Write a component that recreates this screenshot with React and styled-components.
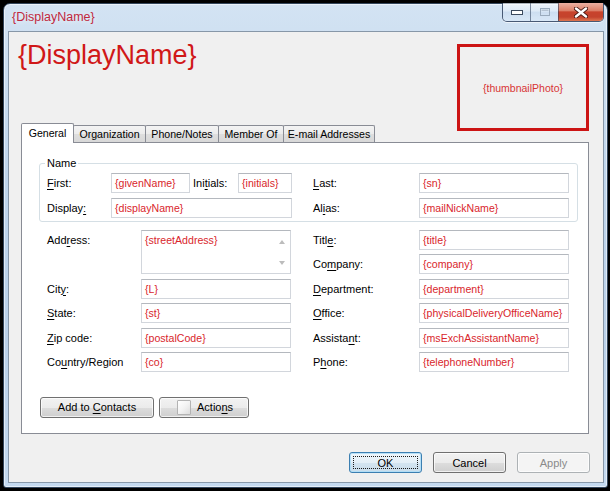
import styled, { createGlobalStyle } from 'styled-components';

const GlobalStyle = createGlobalStyle`
  html, body {
    margin: 0;
    padding: 0;
    background: #000;
  }
  body {
    font-family: "Liberation Sans", Arial, sans-serif;
    font-size: 11px;
    color: #000;
  }
  * {
    box-sizing: border-box;
  }
`;

const Screen = styled.div`
  width: 610px;
  height: 491px;
  padding: 3px 0 0 3px;
  background: #000;
`;

const Window = styled.div`
  width: 605px;
  height: 485px;
  display: flex;
  flex-direction: column;
  border: 1px solid #33465c;
  border-radius: 7px 7px 3px 3px;
  background: linear-gradient(to bottom, #d3e3f3 0%, #bfd5ec 35%, #b9d0e9 70%, #c4d9ef 100%);
  box-shadow: inset 0 0 0 1px rgba(255, 255, 255, 0.55);
`;

const TitleBar = styled.div`
  height: 27px;
  display: flex;
  justify-content: space-between;
  align-items: flex-start;
  padding: 0 3px 0 8px;
`;

const TitleText = styled.div`
  margin-top: 6px;
  font-size: 12.5px;
  line-height: 15px;
  color: #c0283e;
  text-shadow: 0 0 6px rgba(255, 255, 255, 0.9);
`;

const CaptionGroup = styled.div`
  display: flex;
  height: 19px;
  margin-top: -1px;
  border: 1px solid rgba(38, 56, 84, 0.8);
  border-top: none;
  border-radius: 0 0 5px 5px;
  overflow: hidden;
  box-shadow: 0 1px 0 rgba(255, 255, 255, 0.6);
`;

const CaptionButton = styled.div`
  width: ${({ $w }) => $w}px;
  display: flex;
  align-items: center;
  justify-content: center;
  background: ${({ $close }) => $close
    ? 'linear-gradient(to bottom, #eab0a2 0%, #dc8068 42%, #c8432c 50%, #c4432c 78%, #dd7550 100%)'
    : 'linear-gradient(to bottom, rgba(255,255,255,0.6) 0%, rgba(236,243,251,0.45) 45%, rgba(196,214,236,0.35) 50%, rgba(222,236,250,0.55) 100%)'};

  & + & {
    border-left: 1px solid rgba(38, 56, 84, 0.55);
  }
`;

const Client = styled.div`
  flex: 1;
  margin: 0 3px 4px 4px;
  border: 1px solid #8797a8;
  background: #f0f0f0;
  display: flex;
  flex-direction: column;
`;

const Header = styled.div`
  height: 91px;
  display: flex;
  justify-content: space-between;
  align-items: flex-start;
  padding: 0 14px 0 9px;
`;

const Heading = styled.h1`
  margin: 8px 0 0;
  font-size: 27px;
  line-height: 31px;
  font-weight: normal;
  color: #d01818;
`;

const Thumbnail = styled.div`
  width: 132px;
  height: 87px;
  flex-shrink: 0;
  margin-top: 12px;
  position: relative;
  z-index: 3;
  border: 3px solid #cc1414;
  display: flex;
  align-items: center;
  justify-content: center;
  font-size: 10.5px;
  color: #d83434;
`;

const TabArea = styled.div`
  padding: 0 14px 0 12px;
`;

const TabStrip = styled.div`
  height: 19px;
  display: flex;
  align-items: flex-end;
`;

const Tab = styled.div`
  width: ${({ $w }) => $w}px;
  height: ${({ $active }) => ($active ? 20 : 17)}px;
  margin-bottom: ${({ $active }) => ($active ? -1 : 0)}px;
  position: relative;
  z-index: ${({ $active }) => ($active ? 2 : 1)};
  display: flex;
  align-items: center;
  justify-content: center;
  border: 1px solid #898c95;
  border-bottom: none;
  border-radius: 2px 2px 0 0;
  background: ${({ $active }) => $active
    ? '#fff'
    : 'linear-gradient(to bottom, #f4f4f4 0%, #ebebeb 50%, #dedede 51%, #d8d8d8 100%)'};
  padding-bottom: ${({ $active }) => ($active ? 2 : 0)}px;
  font-size: 10.6px;
  white-space: nowrap;

  & + & {
    margin-left: -1px;
  }
`;

const Panel = styled.div`
  height: 292px;
  border: 1px solid #898c95;
  background: #fff;
  display: flex;
  flex-direction: column;
`;

const NameGroup = styled.fieldset`
  margin: 14px 10px 0 17px;
  padding: 3px 8px 3px 7px;
  border: 1px solid #d5dfe5;
  border-radius: 3px;
  min-width: 0;
`;

const Legend = styled.legend`
  padding: 0 2px;
  margin-left: -2px;
  font-size: 11px;
  line-height: 13px;
`;

const NameGrid = styled.div`
  display: grid;
  grid-template-columns: 64px 79px 48px 54px 127px 150px;
  grid-auto-rows: 20px;
  row-gap: 5px;
  align-items: center;
`;

const DetailGrid = styled.div`
  margin: 8px 0 0 25px;
  display: grid;
  grid-template-columns: 94px 150px 128px 150px;
  grid-auto-rows: 20px;
  row-gap: 4.4px;
  align-items: center;
`;

const Label = styled.div`
  padding-left: ${({ $indent }) => $indent || 0}px;
  white-space: nowrap;
  line-height: 20px;

  u {
    text-decoration-thickness: 1px;
    text-underline-offset: 2px;
  }
`;

const AddressLabel = styled(Label)`
  grid-row: span 2;
  align-self: start;
`;

const Field = styled.div`
  grid-column: span ${({ $span }) => $span || 1};
  height: 20px;
  padding: 0 3px;
  border: 1px solid #d2d6dc;
  border-top-color: #b4b8be;
  background: #fff;
  color: #d9262c;
  font-size: 10.6px;
  line-height: 18px;
  white-space: nowrap;
  overflow: hidden;
`;

const TextArea = styled.div`
  grid-row: span 2;
  align-self: stretch;
  display: flex;
  border: 1px solid #d2d6dc;
  border-top-color: #b4b8be;
  background: #fff;
  color: #d9262c;
  font-size: 10.6px;
`;

const TextAreaText = styled.div`
  flex: 1;
  padding: 2px 3px;
  line-height: 14px;
`;

const ScrollColumn = styled.div`
  width: 17px;
  display: flex;
  flex-direction: column;
  align-items: center;
  justify-content: space-between;
  padding: 9px 0 8px;
`;

const Arrow = styled.span`
  width: 0;
  height: 0;
  border-left: 3.5px solid transparent;
  border-right: 3.5px solid transparent;
  ${({ $down }) => ($down ? 'border-top' : 'border-bottom')}: 4px solid #bcbcbc;
`;

const ButtonRow = styled.div`
  margin: 25px 0 0 18px;
  display: flex;
  gap: 5px;
`;

const Button = styled.button`
  position: relative;
  width: ${({ $w }) => $w}px;
  height: 21px;
  padding: 0;
  display: flex;
  align-items: center;
  justify-content: center;
  font-family: "Liberation Sans", Arial, sans-serif;
  font-size: 11px;
  color: ${({ $disabled }) => ($disabled ? '#8a8a8a' : '#000')};
  border: 1px solid ${({ $default, $disabled }) => ($default ? '#3c7fb1' : $disabled ? '#adb2b5' : '#707070')};
  border-radius: 3px;
  background: ${({ $default, $disabled }) => $disabled
    ? '#f4f4f4'
    : $default
      ? 'linear-gradient(to bottom, #eef6fb 0%, #e4eff7 50%, #d4e5f1 51%, #c9dcea 100%)'
      : 'linear-gradient(to bottom, #f2f2f2 0%, #ebebeb 50%, #dddddd 51%, #cfcfcf 100%)'};
  box-shadow: inset 0 0 0 1px ${({ $default }) => ($default ? 'rgba(175,222,247,0.9)' : 'rgba(255,255,255,0.7)')};

  ${({ $default }) => $default && `
    &::after {
      content: '';
      position: absolute;
      inset: 3px;
      border: 1px dotted #1c1c1c;
    }
  `}

  u {
    text-underline-offset: 2px;
  }
`;

const ActionsButton = styled(Button)`
  justify-content: flex-start;
  padding-left: 17px;
`;

const ActionIcon = styled.span`
  width: 14px;
  height: 15px;
  margin-right: 6px;
  border: 1px solid #b3b3b3;
  border-radius: 1px;
  background: linear-gradient(135deg, #ffffff 0%, #f3f3f3 50%, #dcdcdc 100%);
`;

const DialogButtons = styled.div`
  margin-top: 18px;
  padding-right: 13px;
  display: flex;
  justify-content: flex-end;
  gap: 11px;
`;

const MinimizeIcon = () => (
  <svg width="12" height="6" viewBox="0 0 12 6">
    <rect x="0.5" y="1.5" width="11" height="4" fill="#fff" stroke="#3b4a5e" />
  </svg>
);

const MaximizeIcon = () => (
  <svg width="12" height="10" viewBox="0 0 12 10">
    <rect x="1.5" y="1.5" width="9" height="7" fill="none" stroke="#9aabbd" />
    <rect x="2.5" y="2.5" width="7" height="1.5" fill="#b5c3d2" />
  </svg>
);

const CloseIcon = () => (
  <svg width="14" height="11" viewBox="0 0 14 11">
    <path d="M2 1.5 L12 9.5 M12 1.5 L2 9.5" stroke="#4a1a14" strokeWidth="4.2" strokeLinecap="round" />
    <path d="M2 1.5 L12 9.5 M12 1.5 L2 9.5" stroke="#fff" strokeWidth="2.4" strokeLinecap="round" />
  </svg>
);

const tabs = [
  { title: 'General', w: 53, active: true },
  { title: 'Organization', w: 73 },
  { title: 'Phone/Notes', w: 74 },
  { title: 'Member Of', w: 66 },
  { title: 'E-mail Addresses', w: 92 },
];

export default function App() {
  return (
    <Screen>
      <GlobalStyle />
      <Window>
        <TitleBar>
          <TitleText>{'{DisplayName}'}</TitleText>
          <CaptionGroup>
            <CaptionButton $w={27}><MinimizeIcon /></CaptionButton>
            <CaptionButton $w={28}><MaximizeIcon /></CaptionButton>
            <CaptionButton $w={45} $close><CloseIcon /></CaptionButton>
          </CaptionGroup>
        </TitleBar>
        <Client>
          <Header>
            <Heading>{'{DisplayName}'}</Heading>
            <Thumbnail>{'{thumbnailPhoto}'}</Thumbnail>
          </Header>
          <TabArea>
            <TabStrip>
              {tabs.map((t) => (
                <Tab key={t.title} $w={t.w} $active={t.active}>{t.title}</Tab>
              ))}
            </TabStrip>
            <Panel>
              <NameGroup>
                <Legend>Name</Legend>
                <NameGrid>
                  <Label><u>F</u>irst:</Label>
                  <Field>{'{givenName}'}</Field>
                  <Label $indent={3}>Ini<u>t</u>ials:</Label>
                  <Field>{'{initials}'}</Field>
                  <Label $indent={21}><u>L</u>ast:</Label>
                  <Field>{'{sn}'}</Field>
                  <Label>Display<u>:</u></Label>
                  <Field $span={3}>{'{displayName}'}</Field>
                  <Label $indent={21}>Al<u>i</u>as:</Label>
                  <Field>{'{mailNickName}'}</Field>
                </NameGrid>
              </NameGroup>
              <DetailGrid>
                <AddressLabel>Add<u>r</u>ess:</AddressLabel>
                <TextArea>
                  <TextAreaText>{'{streetAddress}'}</TextAreaText>
                  <ScrollColumn>
                    <Arrow />
                    <Arrow $down />
                  </ScrollColumn>
                </TextArea>
                <Label $indent={22}>Titl<u>e</u>:</Label>
                <Field>{'{title}'}</Field>
                <Label $indent={22}>Co<u>m</u>pany:</Label>
                <Field>{'{company}'}</Field>
                <Label>Cit<u>y</u>:</Label>
                <Field>{'{L}'}</Field>
                <Label $indent={22}><u>D</u>epartment:</Label>
                <Field>{'{department}'}</Field>
                <Label><u>S</u>tate:</Label>
                <Field>{'{st}'}</Field>
                <Label $indent={22}><u>O</u>ffice:</Label>
                <Field>{'{physicalDeliveryOfficeName}'}</Field>
                <Label><u>Z</u>ip code:</Label>
                <Field>{'{postalCode}'}</Field>
                <Label $indent={22}>Assista<u>n</u>t:</Label>
                <Field>{'{msExchAssistantName}'}</Field>
                <Label>Co<u>u</u>ntry/Region</Label>
                <Field>{'{co}'}</Field>
                <Label $indent={22}>P<u>h</u>one:</Label>
                <Field>{'{telephoneNumber}'}</Field>
              </DetailGrid>
              <ButtonRow>
                <Button $w={114}><span>Add to <u>C</u>ontacts</span></Button>
                <ActionsButton $w={90}>
                  <ActionIcon />
                  <span>Actio<u>n</u>s</span>
                </ActionsButton>
              </ButtonRow>
            </Panel>
          </TabArea>
          <DialogButtons>
            <Button $w={73} $default>OK</Button>
            <Button $w={73}>Cancel</Button>
            <Button $w={73} $disabled>Apply</Button>
          </DialogButtons>
        </Client>
      </Window>
    </Screen>
  );
}
